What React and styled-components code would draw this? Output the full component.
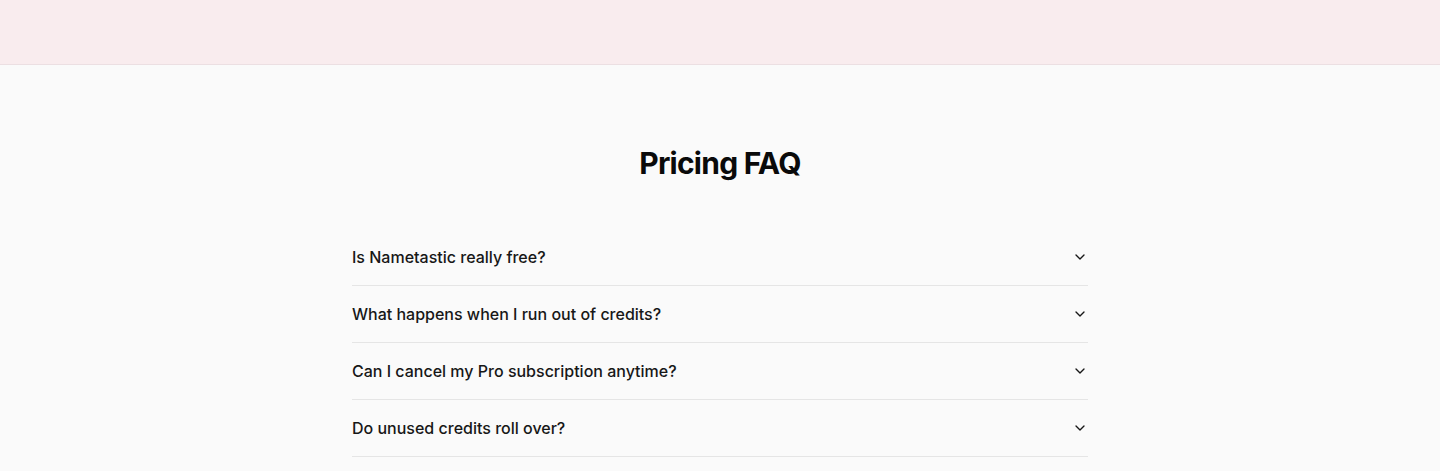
import React from "react";
import styled, { createGlobalStyle } from "styled-components";
import { ChevronDown } from "lucide-react";

const Global = createGlobalStyle`
  html, body { margin: 0; padding: 0; background: #fafafa; }
  body { font-family: Inter, "Noto Sans", sans-serif; color: #171717; -webkit-font-smoothing: antialiased; }
  * { box-sizing: border-box; }
`;

const TopBar = styled.header`
  height: 65px;
  background: #f9ecee;
  border-bottom: 1px solid #ecdfe2;
`;

const Section = styled.section`
  padding: 80px 24px 0;
  display: flex;
  flex-direction: column;
  align-items: center;
`;

const Title = styled.h2`
  margin: 0 0 48px;
  font-size: 30px;
  line-height: 36px;
  font-weight: 700;
  letter-spacing: -0.025em;
  color: #0a0a0a;
  text-align: center;
`;

const List = styled.div`
  width: 736px;
  display: flex;
  flex-direction: column;
`;

const Item = styled.div`
  border-bottom: 1px solid #e5e5e5;
`;

const Trigger = styled.button`
  all: unset;
  width: 100%;
  display: flex;
  align-items: center;
  justify-content: space-between;
  padding: 16px 0;
  font-family: Inter, "Noto Sans", sans-serif;
  font-size: 16px;
  line-height: 24px;
  font-weight: 500;
  color: #171717;
  cursor: pointer;
`;

const questions = [
  "Is Nametastic really free?",
  "What happens when I run out of credits?",
  "Can I cancel my Pro subscription anytime?",
  "Do unused credits roll over?",
];

export default function App() {
  return (
    <>
      <Global />
      <TopBar />
      <Section>
        <Title>Pricing FAQ</Title>
        <List>
          {questions.map((q) => (
            <Item key={q}>
              <Trigger>
                {q}
                <ChevronDown size={16} strokeWidth={2} color="#171717" />
              </Trigger>
            </Item>
          ))}
        </List>
      </Section>
    </>
  );
}
